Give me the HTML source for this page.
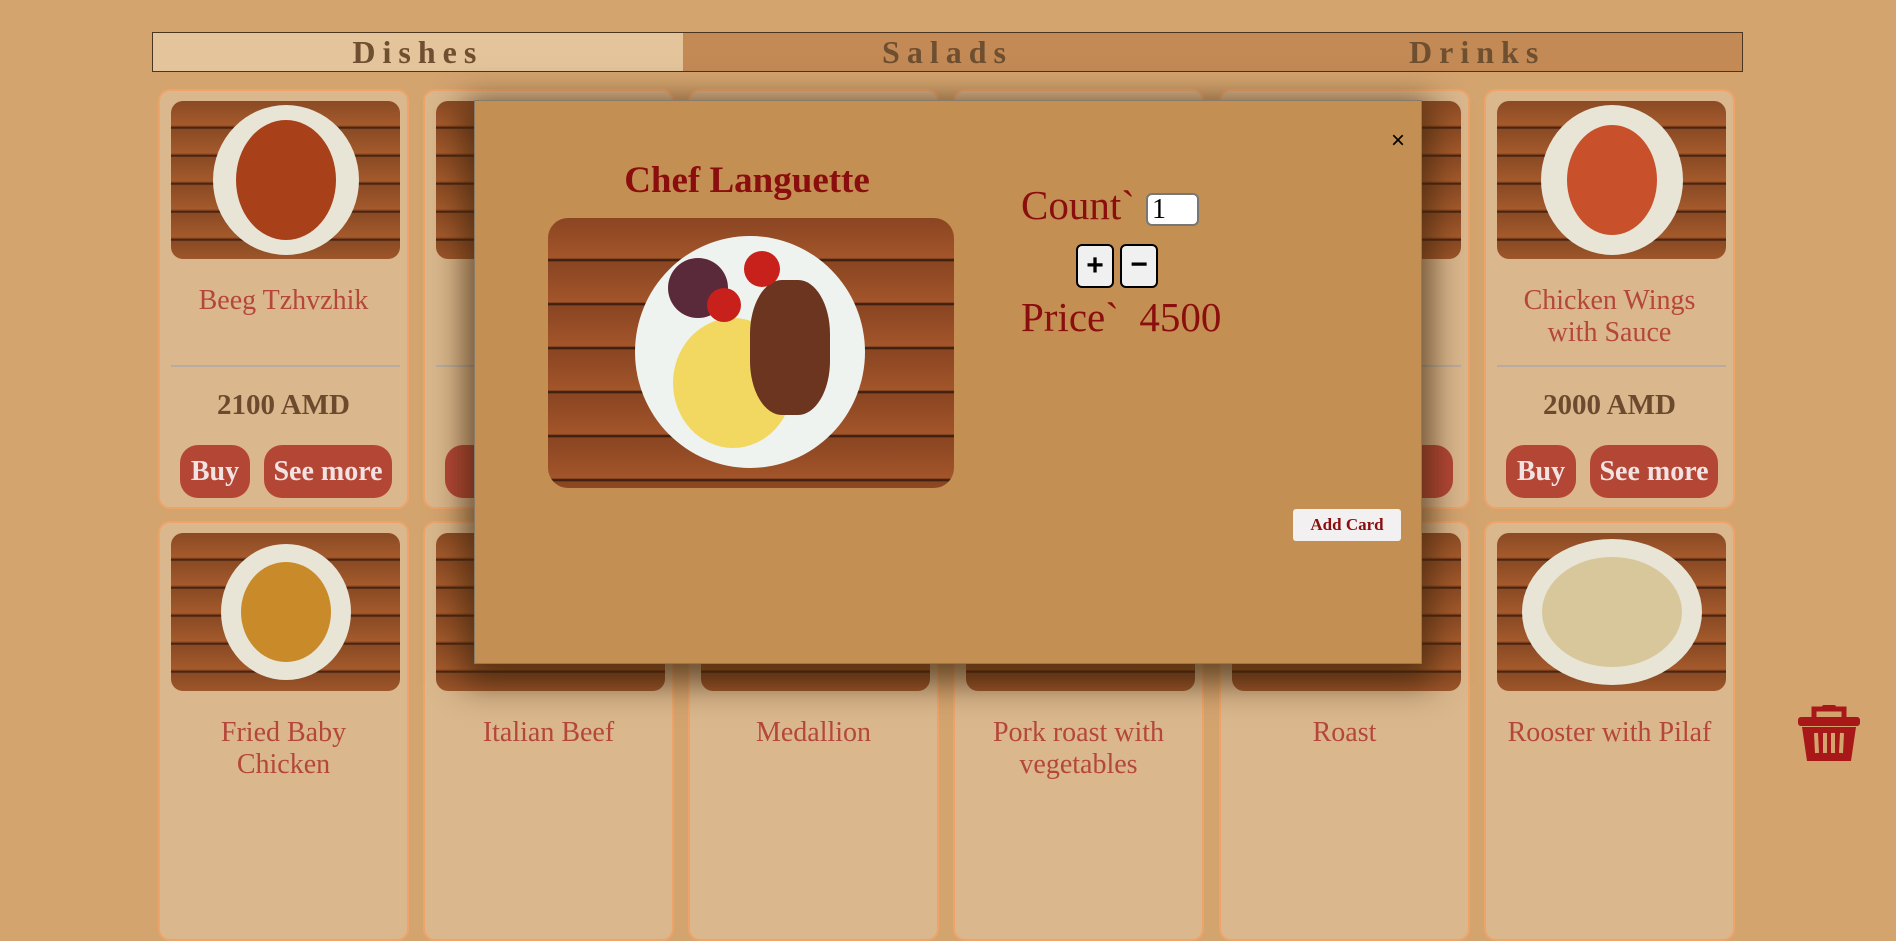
<!DOCTYPE html>
<html><head><meta charset="utf-8"><style>
*{box-sizing:border-box;margin:0;padding:0}
body{width:1896px;height:775px;overflow:hidden;background:#d4a46f;font-family:"Liberation Serif",serif;position:relative}
.tabs{position:absolute;left:152px;top:32px;width:1591px;height:40px;border:1.5px solid #4a3520;display:flex;background:#c38a56}
.tabs div{flex:1;text-align:center;font-weight:bold;font-size:32px;letter-spacing:7px;color:#6e4f30;line-height:38px}
.tabs div.a{background:#e3c49b}
.card{position:absolute;width:251px;height:420px;background:#dab78d;border:2px solid #eea468;border-radius:12px}
.img{position:absolute;left:11px;top:10px;width:229px;height:158px;border-radius:12px;overflow:hidden;background:repeating-linear-gradient(180deg,#8a4a24 0,#a45a2c 24px,#6b3418 26px,#2a1408 27px,#8a4a24 28px)}
.plate{position:absolute;left:50%;top:50%;transform:translate(-50%,-50%);width:146px;height:150px;border-radius:50%;background:#e8e4d6}
.food{position:absolute;left:50%;top:50%;transform:translate(-50%,-50%);width:100px;height:110px;border-radius:50%;background:#a8401a}
.name{position:absolute;top:198px;left:0;width:100%;text-align:center;font-size:28px;color:#b5473a;line-height:32px}
.hr{position:absolute;top:274px;left:11px;width:229px;border-top:2px solid #b8aca0}
.price{position:absolute;top:298px;width:100%;text-align:center;font-weight:bold;font-size:29px;color:#6b4a2e}
.btn{position:absolute;top:354px;height:53px;background:#b44636;border-radius:18px;color:#f3e2e2;font-weight:bold;font-size:28px;line-height:53px;text-align:center}
.overlay{position:absolute;left:474px;top:100px;width:948px;height:564px;background:#c48f53;border:1px solid #8a7a6a;box-shadow:0 10px 30px 10px rgba(60,35,10,.7)}
</style></head><body>
<div class="tabs"><div class="a">Dishes</div><div>Salads</div><div>Drinks</div></div>

<div class="card" style="left:158px;top:89px"><div class="img"><div class="plate"></div><div class="food" style="width:100px;height:120px"></div></div><div class="name" style="top:194px">Beeg Tzhvzhik</div><div class="hr"></div><div class="price">2100 AMD</div><div class="btn" style="left:20px;width:70px">Buy</div><div class="btn" style="left:104px;width:128px">See more</div></div>
<div class="card" style="left:423px;top:89px"><div class="img"></div><div class="hr"></div><div class="btn" style="left:20px;width:70px"></div></div>
<div class="card" style="left:688px;top:89px"><div class="img"></div></div>
<div class="card" style="left:953px;top:89px"><div class="img"></div></div>
<div class="card" style="left:1219px;top:89px"><div class="img"></div><div class="hr"></div><div class="btn" style="left:104px;width:128px"></div></div>
<div class="card" style="left:1484px;top:89px"><div class="img"><div class="plate" style="width:142px;height:150px"></div><div class="food" style="width:90px;height:110px;background:#c8502a"></div></div><div class="name" style="top:194px">Chicken Wings<br>with Sauce</div><div class="hr"></div><div class="price">2000 AMD</div><div class="btn" style="left:20px;width:70px">Buy</div><div class="btn" style="left:104px;width:128px">See more</div></div>

<div class="card" style="left:158px;top:521px"><div class="img"><div class="plate" style="width:130px;height:136px"></div><div class="food" style="background:#c98a2a;width:90px;height:100px"></div></div><div class="name" style="top:194px">Fried Baby<br>Chicken</div></div>
<div class="card" style="left:423px;top:521px"><div class="img"></div><div class="name" style="top:194px">Italian Beef</div></div>
<div class="card" style="left:688px;top:521px"><div class="img"></div><div class="name" style="top:194px">Medallion</div></div>
<div class="card" style="left:953px;top:521px"><div class="img"></div><div class="name" style="top:194px">Pork roast with<br>vegetables</div></div>
<div class="card" style="left:1219px;top:521px"><div class="img"></div><div class="name" style="top:194px">Roast</div></div>
<div class="card" style="left:1484px;top:521px"><div class="img"><div class="plate" style="width:180px;height:146px"></div><div class="food" style="background:#d8c79a;width:140px;height:110px"></div></div><div class="name" style="top:194px">Rooster with Pilaf</div></div>

<div class="overlay">
 <div style="position:absolute;left:0;width:544px;top:58px;text-align:center;font-weight:bold;font-size:37px;color:#8b0e0e">Chef Languette</div>
 <div style="position:absolute;left:73px;top:117px;width:406px;height:270px;border-radius:20px;overflow:hidden;background:repeating-linear-gradient(180deg,#8a4522 0,#a3552a 40px,#2a1408 42px,#8a4522 44px)">
  <div style="position:absolute;left:87px;top:18px;width:230px;height:232px;border-radius:50%;background:#eef3f0"></div>
  <div style="position:absolute;left:125px;top:100px;width:120px;height:130px;border-radius:50%;background:#f2d860"></div>
  <div style="position:absolute;left:202px;top:62px;width:80px;height:135px;border-radius:40%;background:#6b3520"></div>
  <div style="position:absolute;left:120px;top:40px;width:60px;height:60px;border-radius:50%;background:#5a2a3a"></div>
  <div style="position:absolute;left:196px;top:33px;width:36px;height:36px;border-radius:50%;background:#c8201a"></div>
  <div style="position:absolute;left:159px;top:70px;width:34px;height:34px;border-radius:50%;background:#c8201a"></div>
 </div>
 <div style="position:absolute;left:916px;top:26px;font-family:'Liberation Sans',sans-serif;font-size:24px;color:#000">×</div>
 <div style="position:absolute;left:546px;top:80px;font-size:41px;color:#8b0e0e">Count`</div>
 <div style="position:absolute;left:671px;top:92px;width:53px;height:33px;background:#fff;border:2px solid #777;border-radius:6px;font-size:28px;line-height:29px;padding-left:4px">1</div>
 <div style="position:absolute;left:601px;top:143px;width:38px;height:44px;background:#f0f0f0;border:2px solid #000;border-radius:6px;font:bold 30px 'Liberation Sans',sans-serif;text-align:center;line-height:40px">+</div>
 <div style="position:absolute;left:645px;top:143px;width:38px;height:44px;background:#f0f0f0;border:2px solid #000;border-radius:6px;font:bold 30px 'Liberation Sans',sans-serif;text-align:center;line-height:38px">−</div>
 <div style="position:absolute;left:546px;top:192px;font-size:41px;color:#8b0e0e">Price`&nbsp;&nbsp;4500</div>
 <div style="position:absolute;left:818px;top:408px;width:108px;height:32px;background:#f2f0f0;border-radius:3px;text-align:center;line-height:32px;font-weight:bold;font-size:17px;color:#8b0e0e">Add Card</div>
</div>

<svg style="position:absolute;left:1796px;top:703px" width="66" height="60" viewBox="0 0 66 60"><path d="M18 14 V6 H48 V14" fill="none" stroke="#a81818" stroke-width="5"/><rect x="26" y="2" width="14" height="6" rx="2" fill="#a81818"/><rect x="2" y="14" width="62" height="9" rx="3" fill="#a81818"/><path d="M6 24 H60 L55 58 H11 Z" fill="#a81818"/><g stroke="#d4a46f" stroke-width="4"><line x1="20" y1="30" x2="21" y2="50"/><line x1="29" y1="30" x2="29" y2="50"/><line x1="37" y1="30" x2="37" y2="50"/><line x1="46" y1="30" x2="45" y2="50"/></g></svg>
</body></html>
